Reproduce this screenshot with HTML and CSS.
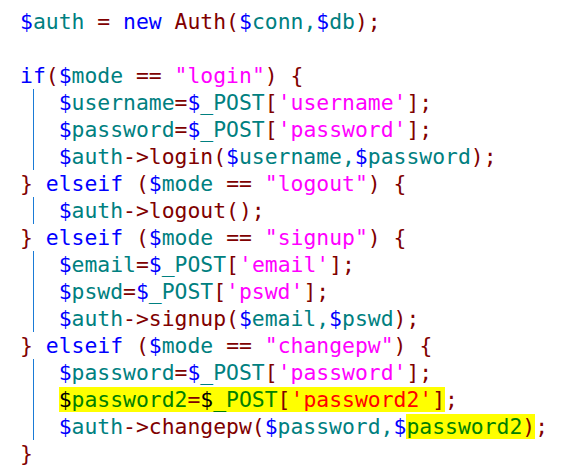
FILE: index.html
```html
<!DOCTYPE html>
<html>
<head>
<meta charset="utf-8">
<link rel="stylesheet" href="styles.css">
</head>
<body>
<div class="code">
<div class="ln"><span class="v">$</span><span class="n">auth</span> <span class="o">=</span> <span class="k">new</span> <span class="o">Auth(</span><span class="v">$</span><span class="n">conn,</span><span class="v">$</span><span class="n">db</span><span class="o">);</span></div>
<div class="ln"> </div>
<div class="ln"><span class="k">if</span><span class="o">(</span><span class="v">$</span><span class="n">mode</span> <span class="o">==</span> <span class="s">"login"</span><span class="o">)</span> <span class="o">{</span></div>
<div class="blk">
<div class="ln"><span class="v">$</span><span class="n">username</span><span class="o">=</span><span class="v">$</span><span class="n">_POST</span><span class="o">[</span><span class="s">'username'</span><span class="o">];</span></div>
<div class="ln"><span class="v">$</span><span class="n">password</span><span class="o">=</span><span class="v">$</span><span class="n">_POST</span><span class="o">[</span><span class="s">'password'</span><span class="o">];</span></div>
<div class="ln"><span class="v">$</span><span class="n">auth</span><span class="o">-&gt;login(</span><span class="v">$</span><span class="n">username,</span><span class="v">$</span><span class="n">password</span><span class="o">);</span></div>
</div>
<div class="ln"><span class="o">}</span> <span class="k">elseif</span> <span class="o">(</span><span class="v">$</span><span class="n">mode</span> <span class="o">==</span> <span class="s">"logout"</span><span class="o">)</span> <span class="o">{</span></div>
<div class="blk">
<div class="ln"><span class="v">$</span><span class="n">auth</span><span class="o">-&gt;logout();</span></div>
</div>
<div class="ln"><span class="o">}</span> <span class="k">elseif</span> <span class="o">(</span><span class="v">$</span><span class="n">mode</span> <span class="o">==</span> <span class="s">"signup"</span><span class="o">)</span> <span class="o">{</span></div>
<div class="blk">
<div class="ln"><span class="v">$</span><span class="n">email</span><span class="o">=</span><span class="v">$</span><span class="n">_POST</span><span class="o">[</span><span class="s">'email'</span><span class="o">];</span></div>
<div class="ln"><span class="v">$</span><span class="n">pswd</span><span class="o">=</span><span class="v">$</span><span class="n">_POST</span><span class="o">[</span><span class="s">'pswd'</span><span class="o">];</span></div>
<div class="ln"><span class="v">$</span><span class="n">auth</span><span class="o">-&gt;signup(</span><span class="v">$</span><span class="n">email,</span><span class="v">$</span><span class="n">pswd</span><span class="o">);</span></div>
</div>
<div class="ln"><span class="o">}</span> <span class="k">elseif</span> <span class="o">(</span><span class="v">$</span><span class="n">mode</span> <span class="o">==</span> <span class="s">"changepw"</span><span class="o">)</span> <span class="o">{</span></div>
<div class="blk">
<div class="ln"><span class="v">$</span><span class="n">password</span><span class="o">=</span><span class="v">$</span><span class="n">_POST</span><span class="o">[</span><span class="s">'password'</span><span class="o">];</span></div>
<div class="ln"><span class="hl"><span class="hv">$</span><span class="hn">password2</span><span class="o">=</span><span class="hv">$</span><span class="hn">_POST</span><span class="o">[</span><span class="hs">'password2'</span><span class="o">]</span></span><span class="o">;</span></div>
<div class="ln"><span class="v">$</span><span class="n">auth</span><span class="o">-&gt;changepw(</span><span class="v">$</span><span class="n">password,</span><span class="v">$</span><span class="hl"><span class="hn">password2</span><span class="o">)</span></span><span class="o">;</span></div>
</div>
<div class="ln"><span class="o">}</span></div>
</div>
</body>
</html>
```
FILE: styles.css
```css
html, body {
  margin: 0;
  background: #ffffff;
}
body {
  padding: 8px 0 0 20px;
}
.code {
  font-family: "DejaVu Sans Mono", "Liberation Mono", monospace;
  font-size: 21.4px;
  line-height: 27px;
  color: #800000;
}
.ln {
  white-space: pre;
  height: 27px;
}
.blk {
  margin-left: 1ch;
  border-left: 1px solid #1a7bd6;
  padding-left: calc(2ch - 1px);
}
.v { color: #0000ff; }
.n { color: #008080; }
.k { color: #0000ff; }
.o { color: #800000; }
.s { color: #ff00ff; }
.hl { background: #ffff00; }
.hv { color: #000000; }
.hn { color: #008000; }
.hs { color: #ff0000; }
```
